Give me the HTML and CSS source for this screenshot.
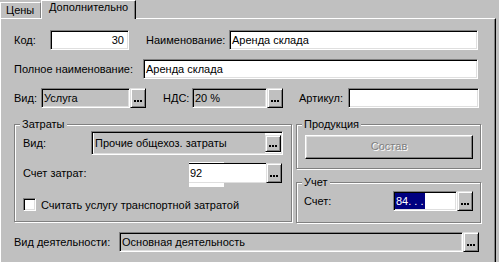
FILE: index.html
```html
<!DOCTYPE html>
<html lang="ru">
<head>
<meta charset="utf-8">
<title>Дополнительно</title>
<link rel="stylesheet" href="styles.css">
</head>
<body>
<div class="tabs">
  <div class="tab">Цены</div>
  <div class="tab active">Дополнительно</div>
</div>
<div class="panel">
  <div class="row r1">
    <span class="lbl w-kod">Код:</span>
    <div class="field f-kod num">30</div>
    <span class="lbl w-name">Наименование:</span>
    <div class="field f-name">Аренда склада</div>
  </div>
  <div class="row r2">
    <span class="lbl w-full">Полное наименование:</span>
    <div class="field f-full">Аренда склада</div>
  </div>
  <div class="row r3">
    <span class="lbl w-vid">Вид:</span>
    <div class="combo">
      <div class="field ro f-vid">Услуга</div>
      <div class="btn"><svg width="8" height="2" viewBox="0 0 8 2"><rect x="0" width="2" height="2"/><rect x="3" width="2" height="2"/><rect x="6" width="2" height="2"/></svg></div>
    </div>
    <span class="lbl w-nds">НДС:</span>
    <div class="combo">
      <div class="field ro f-nds">20 %</div>
      <div class="btn"><svg width="8" height="2" viewBox="0 0 8 2"><rect x="0" width="2" height="2"/><rect x="3" width="2" height="2"/><rect x="6" width="2" height="2"/></svg></div>
    </div>
    <span class="lbl w-art">Артикул:</span>
    <div class="field f-art"></div>
  </div>

  <div class="groups">
    <div class="group g-zat">
      <div class="gtitle">Затраты</div>
      <div class="grow ga">
        <span class="lbl w-gvid">Вид:</span>
        <div class="bigcombo">
          <div class="bc-text">Прочие общехоз. затраты</div>
          <div class="btn btn-s"><svg width="8" height="2" viewBox="0 0 8 2"><rect x="0" width="2" height="2"/><rect x="3" width="2" height="2"/><rect x="6" width="2" height="2"/></svg></div>
        </div>
      </div>
      <div class="grow gb">
        <span class="lbl w-schz">Счет затрат:</span>
        <div class="glitch">
          <div class="gl-field">92</div>
          <div class="gl-patch"></div>
        </div>
        <div class="btn"><svg width="8" height="2" viewBox="0 0 8 2"><rect x="0" width="2" height="2"/><rect x="3" width="2" height="2"/><rect x="6" width="2" height="2"/></svg></div>
      </div>
      <div class="grow gc">
        <span class="chk"></span>
        <span class="lbl chk-lbl">Считать услугу транспортной затратой</span>
      </div>
    </div>
    <div class="rcol">
      <div class="group g-prod">
        <div class="gtitle">Продукция</div>
        <div class="pbtn">Состав</div>
      </div>
      <div class="group g-uch">
        <div class="gtitle">Учет</div>
        <div class="grow gu">
          <span class="lbl w-sch">Счет:</span>
          <div class="field f-sch"><span class="sel">84. . .</span></div>
          <div class="btn"><svg width="8" height="2" viewBox="0 0 8 2"><rect x="0" width="2" height="2"/><rect x="3" width="2" height="2"/><rect x="6" width="2" height="2"/></svg></div>
        </div>
      </div>
    </div>
  </div>

  <div class="row r4">
    <span class="lbl w-dey">Вид деятельности:</span>
    <div class="field ro f-dey">Основная деятельность</div>
    <div class="btn"><svg width="8" height="2" viewBox="0 0 8 2"><rect x="0" width="2" height="2"/><rect x="3" width="2" height="2"/><rect x="6" width="2" height="2"/></svg></div>
  </div>
</div>
</body>
</html>
```

FILE: styles.css
```css
html, body {
  margin: 0;
  padding: 0;
}
body {
  background: #c0c0c0;
  font: 11px "Liberation Sans", Arial, sans-serif;
  color: #000;
  width: 499px;
  height: 262px;
  overflow: hidden;
}

/* tabs */
.tabs {
  display: flex;
  align-items: flex-start;
  height: 18px;
}
.tab {
  box-sizing: border-box;
  margin-top: 2px;
  height: 16px;
  width: 41px;
  padding-left: 5px;
  line-height: 15px;
  border-top: 1px solid #fff;
  border-left: 1px solid #fff;
  border-right: 1px solid #808080;
}
.tab.active {
  position: relative;
  z-index: 1;
  margin-top: 0;
  height: 19px;
  width: 95px;
  padding-left: 7px;
  line-height: 13px;
  background: #c0c0c0;
  border-right: 1px solid #000;
  box-shadow: inset -1px 0 #808080;
}

/* panel */
.panel {
  box-sizing: border-box;
  width: 496px;
  height: 244px;
  border-top: 1px solid #fff;
  border-left: 1px solid #fff;
  border-right: 1px solid #000;
  box-shadow: inset -1px 0 #808080;
  padding: 11px 0 0 13px;
}

.row {
  display: flex;
  align-items: center;
  height: 20px;
}
.r2, .r3 { margin-top: 9px; }
.r4 { margin-top: 9px; }

.lbl {
  white-space: nowrap;
  flex: none;
}

.field {
  box-sizing: border-box;
  flex: none;
  height: 20px;
  background: #fff;
  border: 1px solid;
  border-color: #808080 #fff #fff #808080;
  box-shadow: inset 1px 1px #000, inset -1px -1px #dfdfdf;
  padding: 1px 2px 0;
  line-height: 17px;
  white-space: nowrap;
  overflow: hidden;
}
.field.ro { background: #c0c0c0; }
.num { text-align: right; padding-right: 4px; }

.w-kod { width: 36px; }
.f-kod { width: 79px; }
.w-name { width: 83px; margin-left: 17px; }
.f-name { width: 249px; }
.w-full { width: 129px; }
.f-full { width: 335px; }
.w-vid { width: 27px; }
.f-vid { width: 89px; }
.w-nds { width: 29px; margin-left: 17px; }
.f-nds { width: 75px; }
.w-art { width: 49px; margin-left: 16px; }
.f-art { width: 131px; }

.combo { display: flex; flex: none; }

.btn {
  box-sizing: border-box;
  flex: none;
  width: 16px;
  height: 20px;
  background: #c0c0c0;
  border: 1px solid;
  border-color: #dfdfdf #000 #000 #dfdfdf;
  box-shadow: inset 1px 1px #fff, inset -1px -1px #808080;
  display: flex;
  justify-content: center;
  align-items: flex-start;
  padding-top: 11px;
}
.btn svg { display: block; fill: #000; }
.btn-s { height: 17px; padding-top: 9px; }

/* groups */
.groups {
  display: flex;
  align-items: flex-start;
  margin-top: 16px;
}
.group {
  box-sizing: border-box;
  border: 1px solid #808080;
  box-shadow: inset 1px 1px #fff, 1px 1px #fff;
}
.gtitle {
  margin: -7px 0 0 5px;
  padding: 0 2px;
  width: max-content;
  line-height: 13px;
  background: #c0c0c0;
}
.g-zat {
  width: 278px;
  height: 98px;
  padding-left: 8px;
}
.g-zat .gtitle { margin-left: -3px; }
.grow {
  display: flex;
  align-items: center;
}
.ga { height: 24px; }
.w-gvid { width: 68px; }
.bigcombo {
  box-sizing: border-box;
  display: flex;
  align-items: center;
  width: 192px;
  height: 24px;
  background: #fff;
  border: 1px solid;
  border-color: #808080 #fff #fff #808080;
  box-shadow: inset 1px 1px #000, inset -1px -1px #dfdfdf;
  padding: 0 1px 0 2px;
}
.bc-text {
  flex: 1;
  align-self: stretch;
  background: #c0c0c0;
  margin: 1px 0;
  padding-left: 1px;
  line-height: 20px;
  white-space: nowrap;
}
.gb { margin-top: 8px; height: 20px; }
.w-schz { width: 166px; }
.glitch {
  position: relative;
  width: 77px;
  height: 20px;
}
.gl-field {
  position: relative;
  box-sizing: border-box;
  height: 20px;
  background: #fff;
  border-top: 1px solid #000;
  border-bottom: 1px solid #dfdfdf;
  line-height: 18px;
  padding-left: 1px;
}
.gl-patch {
  position: absolute;
  left: 0;
  top: -1px;
  width: 35px;
  height: 25px;
  background: #fff;
  z-index: -1;
}

.gc { margin-top: 15px; height: 13px; }
.chk {
  box-sizing: border-box;
  width: 13px;
  height: 13px;
  background: #fff;
  border: 1px solid;
  border-color: #808080 #fff #fff #808080;
  box-shadow: inset 1px 1px #000, inset -1px -1px #dfdfdf;
  flex: none;
}
.chk-lbl { margin-left: 5px; }

.rcol {
  margin-left: 4px;
  display: flex;
  flex-direction: column;
}
.g-prod {
  width: 185px;
  height: 45px;
}
.pbtn {
  box-sizing: border-box;
  margin: 4px 0 0 8px;
  width: 168px;
  height: 24px;
  border: 1px solid;
  border-color: #fff #000 #000 #fff;
  box-shadow: inset -1px -1px #808080, inset 1px 1px #dfdfdf;
  text-align: center;
  line-height: 21px;
  color: #808080;
  text-shadow: 1px 1px #fff;
}
.g-uch {
  margin-top: 13px;
  width: 185px;
  height: 41px;
  padding-left: 7px;
}
.g-uch .gtitle { margin-left: -2px; }
.gu { margin-top: 2px; height: 20px; }
.w-sch { width: 89px; }
.f-sch {
  width: 64px;
  padding: 1px 0 0 1px;
  line-height: 16px;
}
.sel {
  display: inline-block;
  background: #000080;
  color: #fff;
  padding: 0 1px;
  line-height: 16px;
}

.w-dey { width: 105px; }
.f-dey { width: 344px; }
```
